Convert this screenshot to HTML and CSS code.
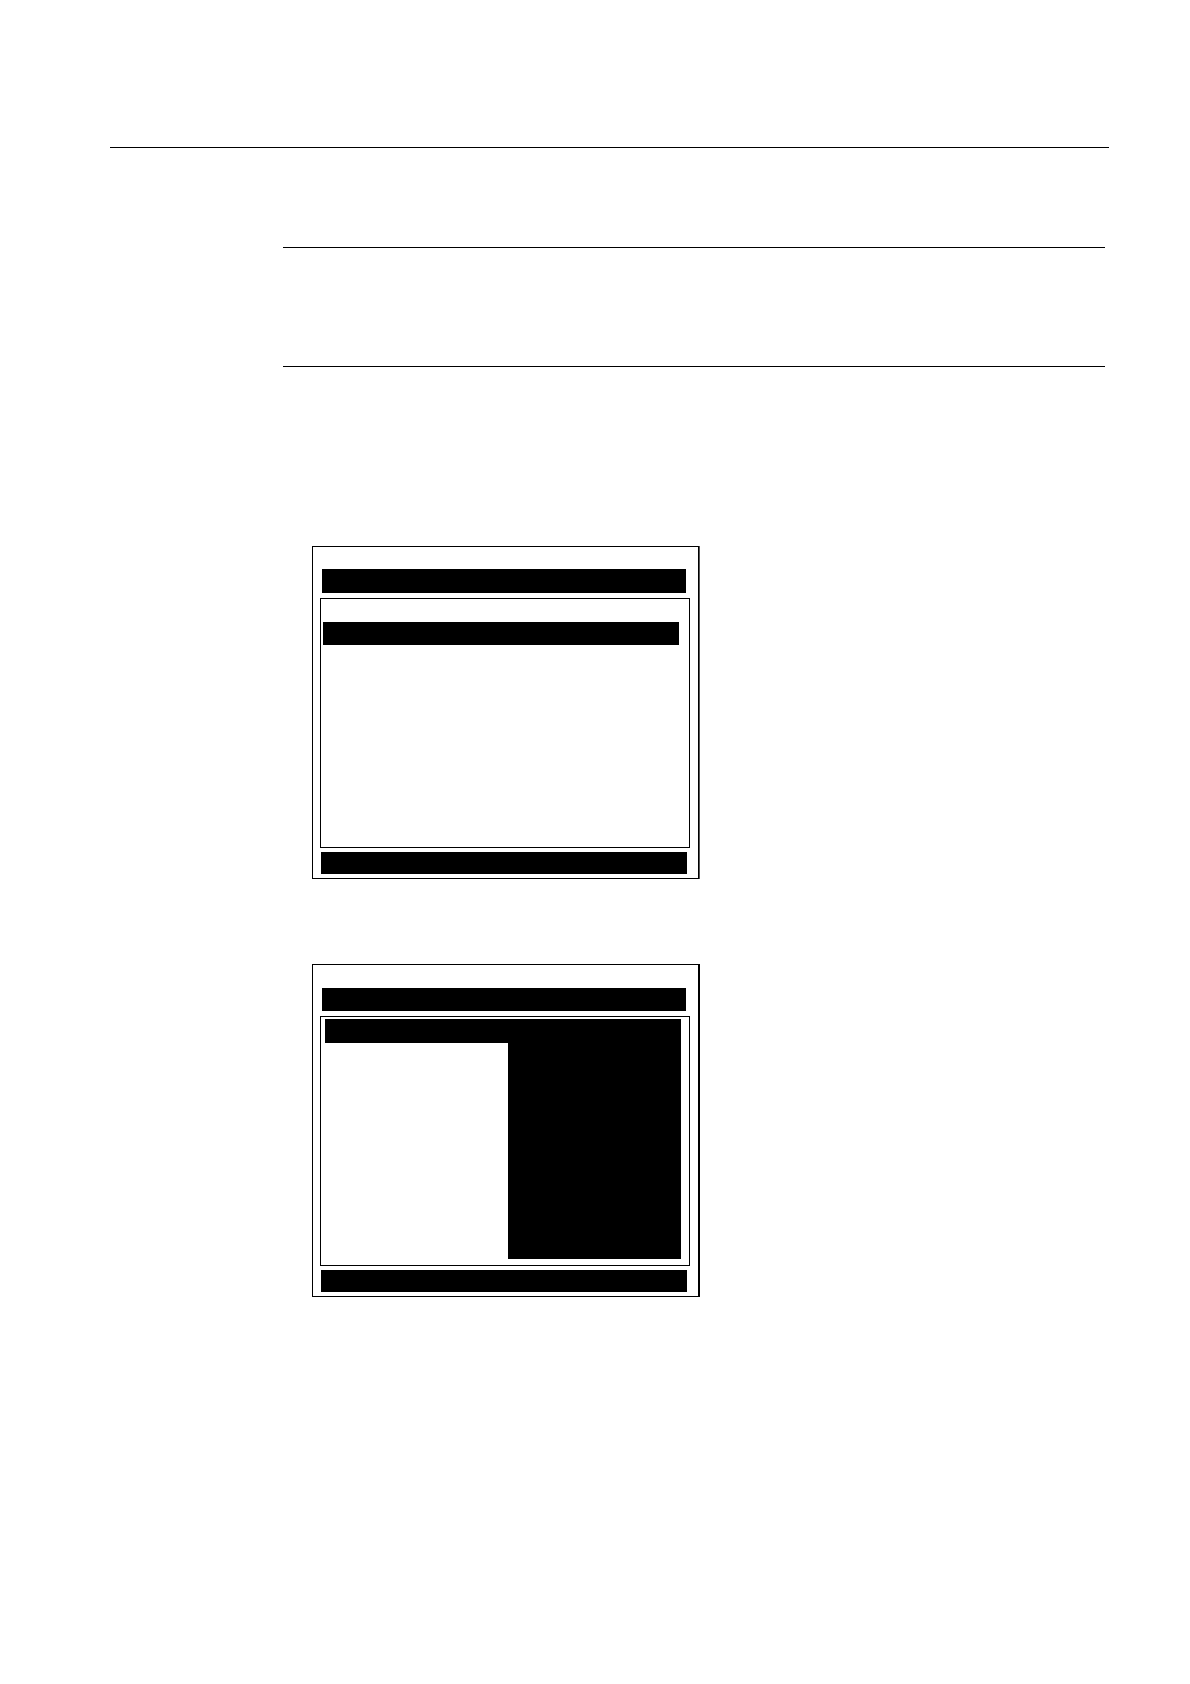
FILE: index.html
```html
<!DOCTYPE html>
<html lang="en">
<head>
<meta charset="utf-8">
<meta name="viewport" content="width=device-width, initial-scale=1">
<title>Display menus</title>
<link rel="stylesheet" href="styles.css">
</head>
<body>
<main class="page">
  <hr class="rule">
  <div class="content">
    <section class="note"></section>
    <section class="screen screen-shaded">
      <div class="title-bar"></div>
      <div class="view view-list">
        <div class="selected-row"></div>
      </div>
      <div class="status-bar"></div>
    </section>
    <section class="screen screen-menu">
      <div class="title-bar"></div>
      <div class="view view-menu">
        <div class="menu-heading"></div>
        <div class="menu-panel"></div>
      </div>
      <div class="status-bar"></div>
    </section>
  </div>
</main>
</body>
</html>
```

FILE: styles.css
```css
*,
*::before,
*::after {
  box-sizing: border-box;
}

body {
  margin: 0;
  background: #fff;
  color: #000;
  font-family: "Liberation Sans", Arial, sans-serif;
}

.page {
  padding: 147px 81px 80px 110px;
}

.rule {
  height: 1px;
  margin: 0;
  border: 0;
  background: #000;
}

.content {
  display: flex;
  flex-direction: column;
  margin: 99px 4px 0 173px;
}

.note {
  min-height: 120px;
  border-top: 1px solid #000;
  border-bottom: 1px solid #000;
}

.screen {
  display: flex;
  flex-direction: column;
  width: 100%;
  max-width: 388px;
  margin-left: 29px;
  padding: 22px 8px 4px 7px;
  border: 1px solid #000;
  border-right-width: 2px;
}

.screen-shaded {
  max-width: 387px;
  margin-top: 179px;
  border-right-width: 1px;
  box-shadow: 1px 0 #555;
}

.screen-menu {
  margin-top: 85px;
  padding-top: 23px;
}

.title-bar {
  height: 24px;
  margin: 0 4px 5px 2px;
  background: #000;
}

.screen-menu .title-bar {
  height: 23px;
}

.view {
  min-height: 250px;
  border: 1px solid #000;
}

.view-list {
  padding: 23px 10px 0 2px;
}

.selected-row {
  height: 23px;
  background: #000;
}

.view-menu {
  display: grid;
  grid-template-columns: 183fr 173fr;
  grid-template-rows: 24px 216px;
  padding: 2px 8px 6px 4px;
}

.menu-heading {
  grid-column: 1 / -1;
  background: #000;
}

.menu-panel {
  grid-column: 2;
  background: #000;
}

.status-bar {
  height: 22px;
  margin: 4px 3px 0 1px;
  background: #000;
}
```
